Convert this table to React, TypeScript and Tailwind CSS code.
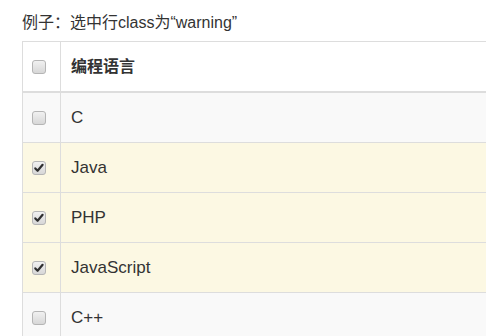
const rows = [
  { name: "C", checked: false, bg: "bg-[#f9f9f9]" },
  { name: "Java", checked: true, bg: "bg-[#fcf8e3]" },
  { name: "PHP", checked: true, bg: "bg-[#fcf8e3]" },
  { name: "JavaScript", checked: true, bg: "bg-[#fcf8e3]" },
  { name: "C++", checked: false, bg: "bg-[#f9f9f9]" },
];

// old-style gray checkbox
function Box({ checked }: { checked: boolean }) {
  return (
    <svg width="14" height="14" viewBox="0 0 14 14">
      <defs>
        <linearGradient id="cbg" x1="0" y1="0" x2="0" y2="1">
          <stop offset="0" stopColor="#f2f2f2" />
          <stop offset="1" stopColor="#d6d6d6" />
        </linearGradient>
      </defs>
      <rect x="0.5" y="0.5" width="13" height="13" rx="2.5" fill="url(#cbg)" stroke="#b5b5b5" />
      {checked && (
        <path d="M3.3 7.4 L5.6 9.8 L10.6 3.8" fill="none" stroke="#2f2f2f" strokeWidth="2.2" strokeLinecap="round" strokeLinejoin="round" />
      )}
    </svg>
  );
}

export default function App() {
  return (
    <div className="w-[486px] h-[336px] overflow-hidden bg-white text-[#333] font-['Liberation_Sans','Noto_Sans_CJK_SC',sans-serif]">
      {/* Caption */}
      <div className="h-[41px] pt-[12px] pl-[22px] text-[16px] leading-[22px] whitespace-nowrap">
        例子：选中行class为“warning”
      </div>

      {/* Table */}
      <div className="ml-[22px] w-[520px] border-l border-t border-[#ddd]">
        <div className="flex h-[51px] border-b-2 border-[#ddd] bg-white">
          <div className="w-[38px] shrink-0 border-r border-[#ddd] flex items-center pl-[9px]">
            <Box checked={false} />
          </div>
          <div className="flex items-center pl-[10px] text-[16px] font-bold text-[#333]">
            编程语言
          </div>
        </div>
        {rows.map((r) => (
          <div key={r.name} className={`flex h-[50px] border-b border-[#ddd] ${r.bg}`}>
            <div className="w-[38px] shrink-0 border-r border-[#ddd] flex items-center pl-[9px] pt-[1px]">
              <Box checked={r.checked} />
            </div>
            <div className="flex items-center pl-[10px] text-[17px]">{r.name}</div>
          </div>
        ))}
      </div>
    </div>
  );
}
